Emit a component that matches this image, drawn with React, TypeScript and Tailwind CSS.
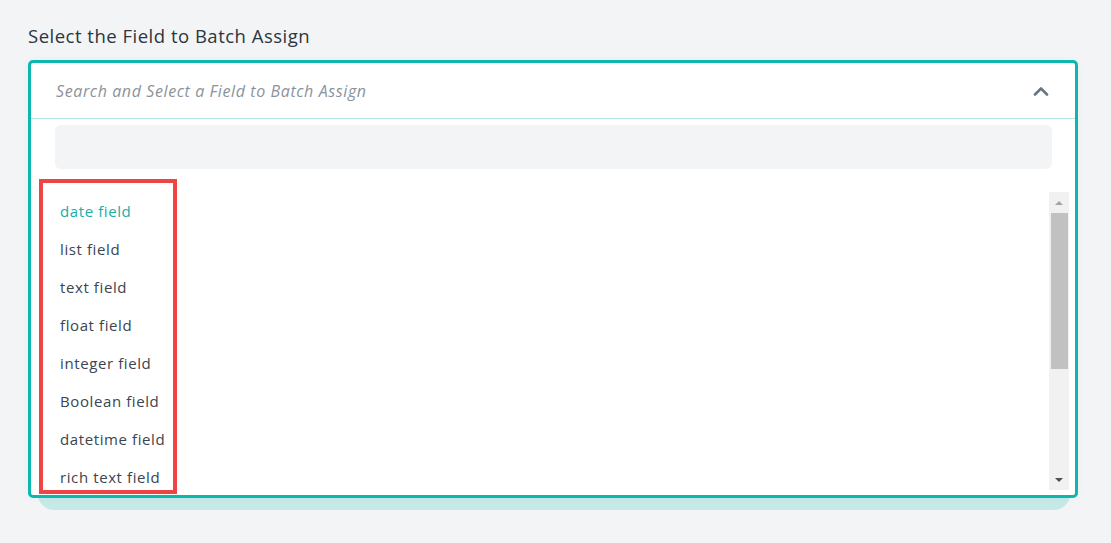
import React from 'react';

const FIELDS = [
  'date field',
  'list field',
  'text field',
  'float field',
  'integer field',
  'Boolean field',
  'datetime field',
  'rich text field',
];

function ChevronUp() {
  return (
    <svg width="16" height="10" viewBox="0 0 16 10" fill="none">
      <path d="M2 8.5 L8 2.5 L14 8.5" stroke="#6b7580" strokeWidth="2.6" strokeLinecap="round" strokeLinejoin="round" />
    </svg>
  );
}

function FakeScrollbar() {
  return (
    <div className="w-[20px] h-[298px] bg-[#f1f1f1] flex flex-col items-center">
      <div className="h-[21px] w-full flex items-center justify-center">
        <div className="w-0 h-0 border-l-[4px] border-r-[4px] border-b-[4px] border-l-transparent border-r-transparent border-b-[#a3a3a3]" />
      </div>
      <div className="w-[17px] h-[156px] bg-[#c1c1c1]" />
      <div className="flex-1" />
      <div className="h-[21px] w-full flex items-center justify-center">
        <div className="w-0 h-0 border-l-[4px] border-r-[4px] border-t-[4px] border-l-transparent border-r-transparent border-t-[#505050]" />
      </div>
    </div>
  );
}

export default function App() {
  return (
    <div
      className="w-[1111px] h-[543px] bg-[#f3f4f6] pl-[28px] pr-[33px] pt-[24px]"
      style={{ fontFamily: '"Open Sans", "Noto Sans", sans-serif' }}
    >
      <h1 className="text-[18.5px] tracking-[0.5px] leading-[24px] text-[#2b3640] mb-[12px]">Select the Field to Batch Assign</h1>

      {/* Dropdown */}
      <div className="relative">
        <div className="absolute left-[10px] right-[8px] -bottom-[12px] h-[40px] rounded-b-[16px] bg-[#c5e9e7]" />
        <div className="relative border-[3px] border-[#0bb8b1] rounded-[5px] bg-white shadow-[0_0_10px_rgba(0,0,0,0.03)]">
          {/* Header */}
          <div className="h-[56px] border-b border-[#b5e5e2] flex items-center justify-between pl-[25px] pr-[26px]">
            <span className="italic text-[16px] tracking-[0.6px] text-[#8a939b]">Search and Select a Field to Batch Assign</span>
            <ChevronUp />
          </div>

          {/* Search input */}
          <div className="px-[24px] pr-[23px] pt-[6px]">
            <div className="h-[44px] rounded-[6px] bg-[#f3f4f6]" />
          </div>

          {/* List */}
          <div className="relative flex pt-[23px] pb-[5px] pr-[6px]">
            <div className="flex-1 h-[298px] overflow-hidden flex flex-col">
              {FIELDS.map((f, i) => (
                <div
                  key={f}
                  className={`h-[38px] shrink-0 flex items-center pl-[29px] text-[15px] tracking-[0.6px] ${
                    i === 0 ? 'text-[#19aca6]' : 'text-[#3a4550]'
                  }`}
                >
                  {f}
                </div>
              ))}
            </div>
            <FakeScrollbar />

            {/* highlight annotation */}
            <div className="absolute left-[8px] top-[10px] w-[138px] h-[315px] border-[4px] border-[#ef4444]" />
          </div>
        </div>
      </div>
    </div>
  );
}
